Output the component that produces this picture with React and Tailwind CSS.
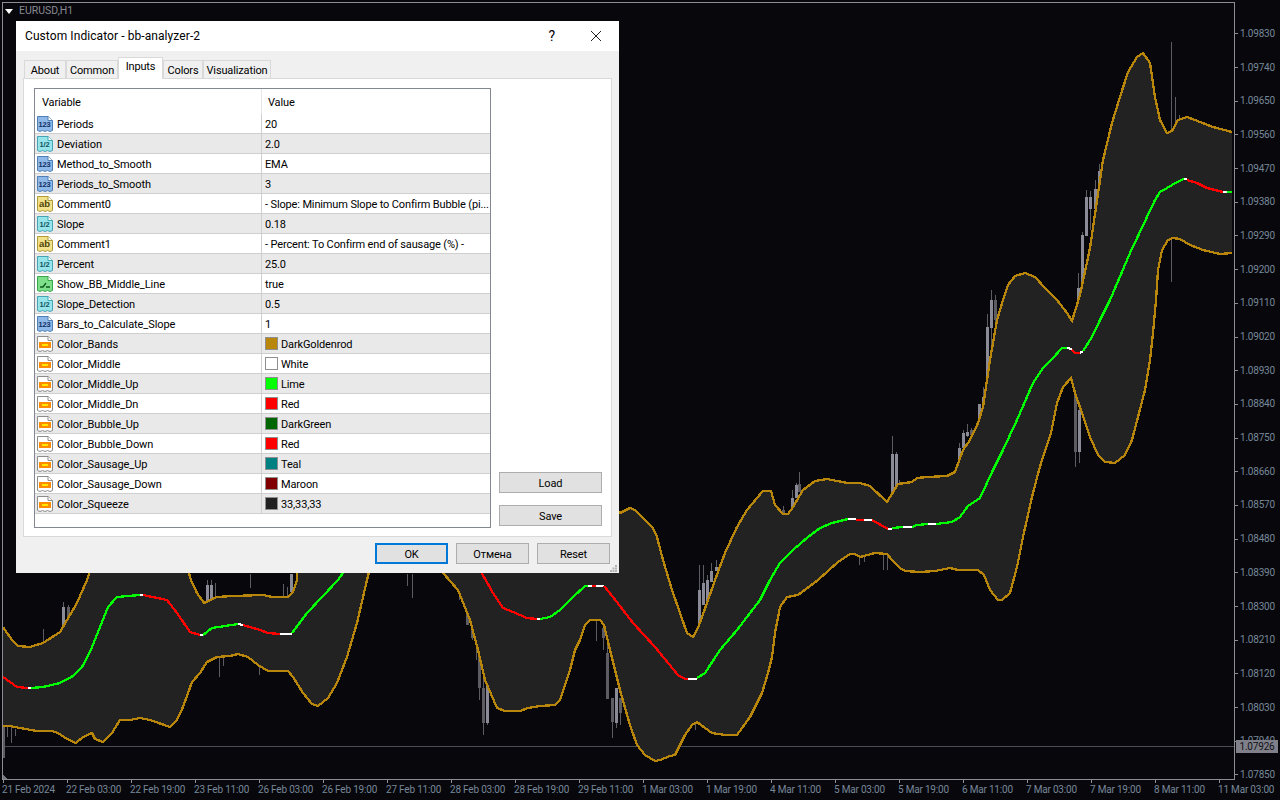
import React from "react";

const prices = [
  "1.09830", "1.09740", "1.09650", "1.09560", "1.09470", "1.09380", "1.09290", "1.09200",
  "1.09110", "1.09020", "1.08930", "1.08840", "1.08750", "1.08660", "1.08570", "1.08480",
  "1.08390", "1.08300", "1.08210", "1.08120", "1.08030", "1.07940", "1.07850",
];

const dates = [
  "21 Feb 2024", "22 Feb 03:00", "22 Feb 19:00", "23 Feb 11:00", "26 Feb 03:00", "26 Feb 19:00",
  "27 Feb 11:00", "28 Feb 03:00", "28 Feb 19:00", "29 Feb 11:00", "1 Mar 03:00", "1 Mar 19:00",
  "4 Mar 11:00", "5 Mar 03:00", "5 Mar 19:00", "6 Mar 11:00", "7 Mar 03:00", "7 Mar 19:00",
  "8 Mar 11:00", "11 Mar 03:00",
];

const rows = [
  { icon: "int", name: "Periods", value: "20" },
  { icon: "dbl", name: "Deviation", value: "2.0" },
  { icon: "int", name: "Method_to_Smooth", value: "EMA" },
  { icon: "int", name: "Periods_to_Smooth", value: "3" },
  { icon: "str", name: "Comment0", value: "- Slope: Minimum Slope to Confirm Bubble (pi..." },
  { icon: "dbl", name: "Slope", value: "0.18" },
  { icon: "str", name: "Comment1", value: "- Percent: To Confirm end of sausage (%) -" },
  { icon: "dbl", name: "Percent", value: "25.0" },
  { icon: "bool", name: "Show_BB_Middle_Line", value: "true" },
  { icon: "dbl", name: "Slope_Detection", value: "0.5" },
  { icon: "int", name: "Bars_to_Calculate_Slope", value: "1" },
  { icon: "col", name: "Color_Bands", value: "DarkGoldenrod", color: "#b8860b" },
  { icon: "col", name: "Color_Middle", value: "White", color: "#ffffff" },
  { icon: "col", name: "Color_Middle_Up", value: "Lime", color: "#00ff00" },
  { icon: "col", name: "Color_Middle_Dn", value: "Red", color: "#ff0000" },
  { icon: "col", name: "Color_Bubble_Up", value: "DarkGreen", color: "#006400" },
  { icon: "col", name: "Color_Bubble_Down", value: "Red", color: "#ff0000" },
  { icon: "col", name: "Color_Sausage_Up", value: "Teal", color: "#008080" },
  { icon: "col", name: "Color_Sausage_Down", value: "Maroon", color: "#800000" },
  { icon: "col", name: "Color_Squeeze", value: "33,33,33", color: "#212121" },
];

const tabs = [
  { label: "About", width: "w-[42px]" },
  { label: "Common", width: "w-[52px]" },
  { label: "Inputs", width: "w-[45px]", active: true },
  { label: "Colors", width: "w-[40px]" },
  { label: "Visualization", width: "w-[68px]" },
];

// band and line points traced from the chart, the ones under the dialog are only there to close the shape
const upper = [
  [3, 627], [12, 640], [18, 646], [30, 647], [43, 643], [60, 632], [77, 603], [87, 580], [92, 565],
  [100, 520], [180, 520], [188, 570], [191, 580], [197, 593], [204, 603], [217, 597], [233, 596],
  [263, 595], [272, 597], [288, 597], [293, 592], [297, 580], [305, 300], [610, 300], [613, 508],
  [620, 513], [630, 508], [635, 510], [653, 528], [657, 537], [663, 560], [672, 590], [680, 613],
  [687, 633], [693, 637], [698, 628], [707, 603], [715, 580], [725, 553], [737, 527], [747, 510],
  [757, 498], [763, 491], [771, 491], [775, 505], [783, 514], [788, 514], [793, 507], [803, 490],
  [815, 481], [827, 479], [837, 481], [848, 483], [860, 483], [870, 486], [887, 502], [898, 484],
  [912, 482], [917, 478], [927, 477], [947, 476], [955, 472], [963, 450], [970, 440], [978, 423],
  [983, 407], [990, 360], [997, 320], [1003, 300], [1008, 285], [1015, 276], [1025, 273], [1035, 277],
  [1045, 288], [1057, 300], [1067, 313], [1072, 321], [1080, 295], [1090, 248], [1103, 160],
  [1112, 123], [1120, 97], [1128, 72], [1137, 57], [1143, 53], [1150, 63], [1155, 97], [1160, 120],
  [1167, 133], [1172, 131], [1178, 120], [1187, 117], [1200, 122], [1213, 127], [1232, 132],
];

const lower = [
  [3, 726], [10, 726], [20, 728], [37, 731], [52, 731], [58, 733], [67, 739], [76, 743], [83, 737],
  [92, 733], [95, 739], [103, 742], [112, 733], [120, 720], [130, 720], [140, 718], [150, 720],
  [170, 727], [177, 720], [183, 707], [192, 682], [200, 673], [207, 662], [217, 657], [230, 656],
  [238, 654], [248, 657], [258, 665], [268, 671], [288, 671], [293, 677], [303, 693], [312, 704],
  [318, 706], [328, 698], [337, 683], [347, 657], [357, 623], [367, 580], [372, 560], [385, 520],
  [430, 520], [443, 573], [458, 590], [470, 620], [478, 650], [485, 680], [497, 708], [505, 711],
  [520, 711], [528, 708], [540, 706], [555, 705], [560, 700], [570, 670], [575, 650], [580, 640],
  [585, 625], [590, 620], [600, 620], [604, 625], [610, 650], [620, 690], [630, 725], [637, 745],
  [645, 755], [655, 761], [660, 760], [670, 756], [675, 755], [680, 745], [685, 735], [692, 725],
  [697, 722], [705, 728], [712, 733], [725, 735], [737, 735], [750, 717], [762, 693], [768, 673],
  [772, 657], [775, 633], [780, 607], [787, 597], [798, 595], [818, 580], [838, 562], [850, 554],
  [855, 554], [860, 557], [875, 553], [887, 554], [892, 560], [900, 568], [905, 571], [920, 572],
  [935, 571], [950, 568], [958, 570], [978, 570], [984, 575], [990, 590], [998, 600], [1002, 600],
  [1010, 593], [1017, 567], [1023, 537], [1032, 497], [1039, 470], [1043, 457], [1051, 433],
  [1057, 403], [1063, 387], [1071, 378], [1075, 393], [1082, 413], [1090, 437], [1098, 455],
  [1105, 462], [1115, 463], [1125, 455], [1132, 440], [1138, 417], [1145, 390], [1150, 360],
  [1153, 333], [1156, 300], [1158, 270], [1162, 250], [1168, 240], [1173, 238], [1180, 239],
  [1190, 245], [1203, 250], [1220, 254], [1232, 253],
];

const RED = "#ff0000";
const LIME = "#00ff00";
const WHITE = "#ffffff";

const middle = [
  [RED, [[3, 677], [10, 682], [17, 687], [28, 688]]],
  [WHITE, [[28, 688], [31, 688]]],
  [LIME, [[31, 688], [43, 687], [60, 683], [73, 676], [82, 667], [90, 652], [100, 627], [108, 607], [117, 597], [140, 595]]],
  [WHITE, [[140, 595], [143, 595]]],
  [RED, [[143, 595], [167, 600], [177, 613], [190, 632], [200, 635]]],
  [WHITE, [[200, 635], [203, 635]]],
  [LIME, [[203, 635], [212, 628], [238, 624]]],
  [WHITE, [[238, 624], [243, 625]]],
  [RED, [[243, 625], [260, 630], [268, 633], [280, 634]]],
  [WHITE, [[280, 634], [292, 634]]],
  [LIME, [[292, 633], [307, 613], [338, 580], [345, 570]]],
  [RED, [[480, 570], [493, 593], [503, 608], [513, 612], [527, 618], [537, 619]]],
  [WHITE, [[537, 619], [540, 619]]],
  [LIME, [[540, 619], [550, 617], [560, 610], [573, 597], [585, 586], [588, 586]]],
  [WHITE, [[588, 586], [592, 586]]],
  [RED, [[592, 586], [596, 586]]],
  [WHITE, [[596, 586], [604, 586]]],
  [RED, [[604, 586], [613, 597], [633, 623], [655, 647], [678, 675], [685, 679], [688, 679]]],
  [WHITE, [[688, 679], [697, 679]]],
  [LIME, [[697, 678], [705, 673], [720, 650], [737, 630], [760, 600], [770, 580], [780, 563], [793, 550], [808, 537], [820, 528], [832, 523], [848, 519]]],
  [WHITE, [[848, 519], [856, 519]]],
  [RED, [[856, 520], [864, 520]]],
  [WHITE, [[864, 520], [872, 520]]],
  [RED, [[872, 520], [888, 529]]],
  [WHITE, [[888, 529], [892, 529]]],
  [LIME, [[892, 528], [903, 527]]],
  [WHITE, [[903, 527], [912, 527]]],
  [LIME, [[912, 527], [917, 525], [928, 524]]],
  [WHITE, [[928, 524], [936, 524]]],
  [LIME, [[936, 524], [952, 522], [960, 517], [968, 506], [980, 498], [993, 470], [1003, 450], [1017, 420], [1033, 383], [1043, 368], [1053, 358], [1062, 348], [1067, 348]]],
  [WHITE, [[1067, 348], [1072, 349]]],
  [RED, [[1072, 350], [1075, 353], [1080, 353]]],
  [WHITE, [[1080, 353], [1083, 351]]],
  [LIME, [[1083, 351], [1092, 337], [1100, 320], [1110, 300], [1130, 253], [1155, 200], [1160, 192], [1167, 188], [1177, 182], [1184, 179]]],
  [WHITE, [[1184, 179], [1187, 179]]],
  [RED, [[1187, 180], [1197, 183], [1207, 188], [1223, 192]]],
  [WHITE, [[1223, 192], [1227, 192]]],
  [LIME, [[1227, 192], [1232, 192]]],
];

const LIGHT = "#8b8b98";
const DARK = "#5c5c62";

// x, wick top, wick bottom, body top, body bottom, colour. body 0 = only a wick
const candles = [
  [3, 727, 758, 727, 758, DARK], [7, 727, 737, 0, 0, DARK], [11, 725, 743, 0, 0, DARK], [15, 729, 736, 0, 0, DARK],
  [43, 629, 642, 0, 0, DARK], [63, 602, 630, 607, 627, LIGHT], [68, 605, 625, 607, 620, DARK],
  [207, 580, 602, 585, 602, LIGHT], [211, 580, 600, 585, 600, LIGHT], [215, 583, 597, 0, 0, DARK],
  [219, 657, 677, 0, 0, DARK], [223, 657, 666, 0, 0, DARK], [259, 665, 675, 0, 0, DARK],
  [250, 574, 588, 0, 0, DARK], [283, 584, 596, 0, 0, DARK], [287, 587, 596, 0, 0, DARK], [291, 574, 592, 574, 592, LIGHT],
  [407, 574, 586, 0, 0, DARK], [412, 574, 598, 0, 0, DARK],
  [459, 588, 600, 0, 0, DARK], [463, 593, 602, 593, 602, DARK], [467, 607, 625, 607, 625, DARK],
  [472, 622, 640, 622, 638, DARK], [476, 630, 660, 634, 640, LIGHT], [479, 640, 700, 640, 688, DARK],
  [483, 670, 735, 688, 723, DARK], [487, 683, 725, 683, 723, LIGHT],
  [596, 620, 641, 0, 0, DARK], [603, 628, 650, 628, 638, DARK], [607, 640, 699, 653, 699, DARK],
  [612, 698, 738, 698, 722, DARK], [616, 688, 728, 688, 723, LIGHT], [620, 698, 725, 698, 713, DARK],
  [695, 720, 730, 0, 0, DARK], [699, 565, 628, 590, 628, LIGHT], [703, 565, 605, 583, 605, LIGHT],
  [707, 575, 602, 580, 602, LIGHT], [711, 563, 582, 571, 582, LIGHT], [716, 560, 571, 567, 571, LIGHT],
  [783, 506, 514, 510, 514, DARK], [792, 490, 510, 498, 510, LIGHT], [796, 483, 498, 485, 498, LIGHT], [799, 472, 492, 484, 492, DARK],
  [859, 555, 565, 0, 0, DARK], [864, 555, 562, 0, 0, DARK], [883, 555, 570, 0, 0, DARK], [887, 550, 570, 0, 0, DARK],
  [892, 436, 495, 454, 495, LIGHT], [896, 452, 490, 454, 490, LIGHT], [899, 480, 490, 0, 0, DARK],
  [959, 443, 470, 448, 465, LIGHT], [963, 430, 448, 433, 448, LIGHT], [967, 424, 437, 432, 436, LIGHT], [971, 428, 435, 430, 435, DARK],
  [979, 404, 420, 404, 420, LIGHT], [983, 387, 405, 397, 405, LIGHT], [987, 314, 400, 327, 400, LIGHT],
  [991, 290, 345, 300, 328, LIGHT], [995, 295, 322, 300, 320, DARK],
  [1075, 385, 467, 393, 452, DARK], [1079, 400, 463, 410, 452, LIGHT],
  [1078, 273, 300, 288, 300, LIGHT], [1082, 232, 300, 235, 300, LIGHT], [1086, 190, 236, 197, 236, LIGHT],
  [1090, 191, 230, 197, 209, LIGHT], [1095, 180, 209, 189, 209, LIGHT], [1099, 164, 190, 171, 190, LIGHT],
  [1171, 42, 282, 0, 0, DARK], [1175, 97, 128, 0, 0, DARK], [1179, 115, 120, 0, 0, DARK],
];

const toPoints = (pts) => pts.map((p) => p.join(",")).join(" ");

function Chart() {
  return (
    <svg className="block w-[1231px] h-[776px]" viewBox="3 3 1231 776" shapeRendering="crispEdges">
      <line x1="3" y1="746.5" x2="1234" y2="746.5" stroke="#4c4c54" strokeWidth="1" />
      <polygon points="3,775 3,779 8,779" fill="#77777f" />
      {candles.map(([x, wt, wb, bt, bb, c], i) => (
        <g key={i}>
          <line x1={x + 0.5} y1={wt} x2={x + 0.5} y2={wb} stroke="#5c5c62" strokeWidth="1" />
          {bb > 0 && <rect x={x - 1} y={bt} width="3" height={bb - bt} fill={c} />}
        </g>
      ))}
      <polygon points={toPoints([...upper, ...[...lower].reverse()])} fill="#222222" />
      <polyline points={toPoints(upper)} fill="none" stroke="#b8860b" strokeWidth="2.3" />
      <polyline points={toPoints(lower)} fill="none" stroke="#b8860b" strokeWidth="2.3" />
      {middle.map(([c, pts], i) => (
        <polyline key={i} points={toPoints(pts)} fill="none" stroke={c} strokeWidth="2.3" />
      ))}
    </svg>
  );
}

const iconStyles = {
  int: { fill: "#8fb9e8", edge: "#4f7fb5", label: "123", ink: "#0f2f63" },
  dbl: { fill: "#97e4ea", edge: "#46a5b5", label: "1/2", ink: "#0d5560" },
  str: { fill: "#f3e28c", edge: "#b09a3a", label: "ab", ink: "#4f4306" },
  bool: { fill: "#7fe08c", edge: "#3aa64c" },
  col: { fill: "#ffffff", edge: "#8c8c8c" },
};

function TypeIcon({ type }) {
  const s = iconStyles[type];
  return (
    <svg className="w-4 h-4 shrink-0" viewBox="0 0 16 16">
      <path
        d="M0.5 0.5H11L15.5 4.5V14.5L13 15.5L10.5 14.5L8 15.5L5.5 14.5L3 15.5L0.5 14.5Z"
        fill={s.fill}
        stroke={s.edge}
      />
      <path d="M11 0.5V4.500H15.5" fill="#ffffff" stroke={s.edge} />
      {s.label && (
        <text
          x="7.5"
          y="10.500"
          textAnchor="middle"
          fontSize={s.label === "ab" ? 9.5 : 7.5}
          fontWeight="700"
          fontFamily="Liberation Sans, sans-serif"
          fill={s.ink}
        >
          {s.label}
        </text>
      )}
      {type === "bool" && (
        <path d="M3 11H6L9 7M9 11H13" fill="none" stroke="#0f5a1c" strokeWidth="1.3" />
      )}
      {type === "col" && (
        <>
          <rect x="2" y="6" width="12" height="6" fill="#ff8c00" />
          <rect x="5" y="8" width="6" height="2" fill="#ffe600" />
        </>
      )}
    </svg>
  );
}

function ParamRow({ row, index }) {
  return (
    <div
      className={`grid grid-cols-[227px_1fr] h-5 border-b border-[#cfcfcf] ${
        index % 2 === 1 ? "bg-[#e9e9e9]" : "bg-white"
      }`}
    >
      <div className="flex items-center pl-[2px] gap-1 border-r border-[#cfcfcf]">
        <TypeIcon type={row.icon} />
        <span className="pt-[2px] tracking-[-0.08px]">{row.name}</span>
      </div>
      <div className="flex items-center pl-[3px] whitespace-nowrap overflow-hidden">
        {row.color && (
          <span
            className="w-[13px] h-[13px] border border-[#8f8f8f] mr-[3px] shrink-0"
            style={{ backgroundColor: row.color }}
          />
        )}
        <span className="pt-[2px]">{row.value}</span>
      </div>
    </div>
  );
}

function DialogButton({ children, className = "border border-[#adadad]" }) {
  return <button className={`h-[21px] w-full pt-[2px] bg-[#e1e1e1] text-black ${className}`}>{children}</button>;
}

function Dialog() {
  return (
    <div className="absolute left-[16px] top-[21px] w-[603px] h-[552px] bg-[#f0f0f0] text-[11px] tracking-[-0.14px] leading-4 text-black [font-family:Roboto,sans-serif]">
      <div className="h-[30px] bg-white flex items-center pl-[9px] text-[12px]">
        <span className="tracking-[0.08px]">Custom Indicator - bb-analyzer-2</span>
        <span className="ml-auto mr-[35px] text-[14px]">?</span>
        <svg className="w-[12px] h-[12px] mr-[17px]" viewBox="0 0 12 12">
          <path d="M1 1L11 11M11 1L1 11" stroke="#222" strokeWidth="1" fill="none" />
        </svg>
      </div>
      <div className="pt-[7px] px-[7px]">
        <div className="flex items-end h-5 pl-px">
          {tabs.map((t) => (
            <div
              key={t.label}
              className={`flex items-center justify-center border border-[#d9d9d9] ${t.width} ${
                t.active ? "h-[22px] bg-white border-b-0 -mb-px z-10 pb-[3px]" : "h-[18px] pt-[2px] bg-[#f0f0f0] border-b-0"
              }`}
            >
              {t.label}
            </div>
          ))}
        </div>
        <div className="flex h-[459px] bg-white border border-[#d9d9d9] pl-[10px] pt-[9px]">
          <div className="w-[457px] h-[440px] border border-[#828790]">
            <div className="grid grid-cols-[227px_1fr] h-[25px] bg-white">
              <div className="flex items-center pl-[7px] pt-[2px] border-r border-[#e5e5e5]">Variable</div>
              <div className="flex items-center pl-[6px] pt-[2px]">Value</div>
            </div>
            {rows.map((row, i) => (
              <ParamRow key={row.name} row={row} index={i} />
            ))}
          </div>
          <div className="ml-2 w-[103px] h-[438px] flex flex-col justify-end gap-3">
            <DialogButton>Load</DialogButton>
            <DialogButton>Save</DialogButton>
          </div>
        </div>
      </div>
      <div className="flex justify-end gap-2 pt-[6px] pr-[9px]">
        <div className="w-[73px]">
          <DialogButton className="border-2 border-[#0078d7]">OK</DialogButton>
        </div>
        <div className="w-[73px]">
          <DialogButton>Отмена</DialogButton>
        </div>
        <div className="w-[73px]">
          <DialogButton>Reset</DialogButton>
        </div>
      </div>
      <svg className="absolute right-[2px] bottom-[1px] w-[7px] h-[7px]" viewBox="0 0 7 7">
        <path d="M5 0h2v2H5zM2.500 2.500h2v2h-2zM5 2.500h2v2H5zM0 5h2v2H0zM2.500 5h2v2h-2zM5 5h2v2H5z" fill="#b5b5b5" />
      </svg>
    </div>
  );
}

export default function App() {
  return (
    <div className="relative w-[1280px] h-[800px] overflow-hidden bg-[#07070c] text-[#778899] text-[10px] tracking-[-0.2px] leading-3 [font-family:Roboto,sans-serif]">
      <div className="flex pt-[2px] h-[780px]">
        <div className="relative ml-[2px] w-[1233px] h-[778px] border border-[#8c8c94]">
          <Chart />
          <div className="absolute left-[2px] top-[2px] flex items-center gap-[6px] text-[10.5px] tracking-normal text-[#8a8a92]">
            <span className="w-0 h-0 border-x-[4px] border-x-transparent border-t-[5px] border-t-white" />
            <span>EURUSD,H1</span>
          </div>
        </div>
        <div className="pt-[15px] h-[778px]">
          {prices.map((p) => (
            <div key={p} className="flex items-center h-[33.7px]">
              <span className="w-[3px] h-px bg-[#8c8c94] mr-[2px]" />
              <span>{p}</span>
            </div>
          ))}
        </div>
      </div>
      <div className="flex pl-[3px]">
        {dates.map((d) => (
          <div key={d} className="w-16 shrink-0">
            <div className="w-px h-[3px] bg-[#8c8c94]" />
            <div className="-ml-px pt-[1px] whitespace-nowrap">{d}</div>
          </div>
        ))}
      </div>
      <div className="absolute left-[1236px] top-[740px] w-[42px] h-[13px] flex items-center justify-center bg-[#80808a] text-[#101014]">
        1.07926
      </div>
      <Dialog />
    </div>
  );
}
